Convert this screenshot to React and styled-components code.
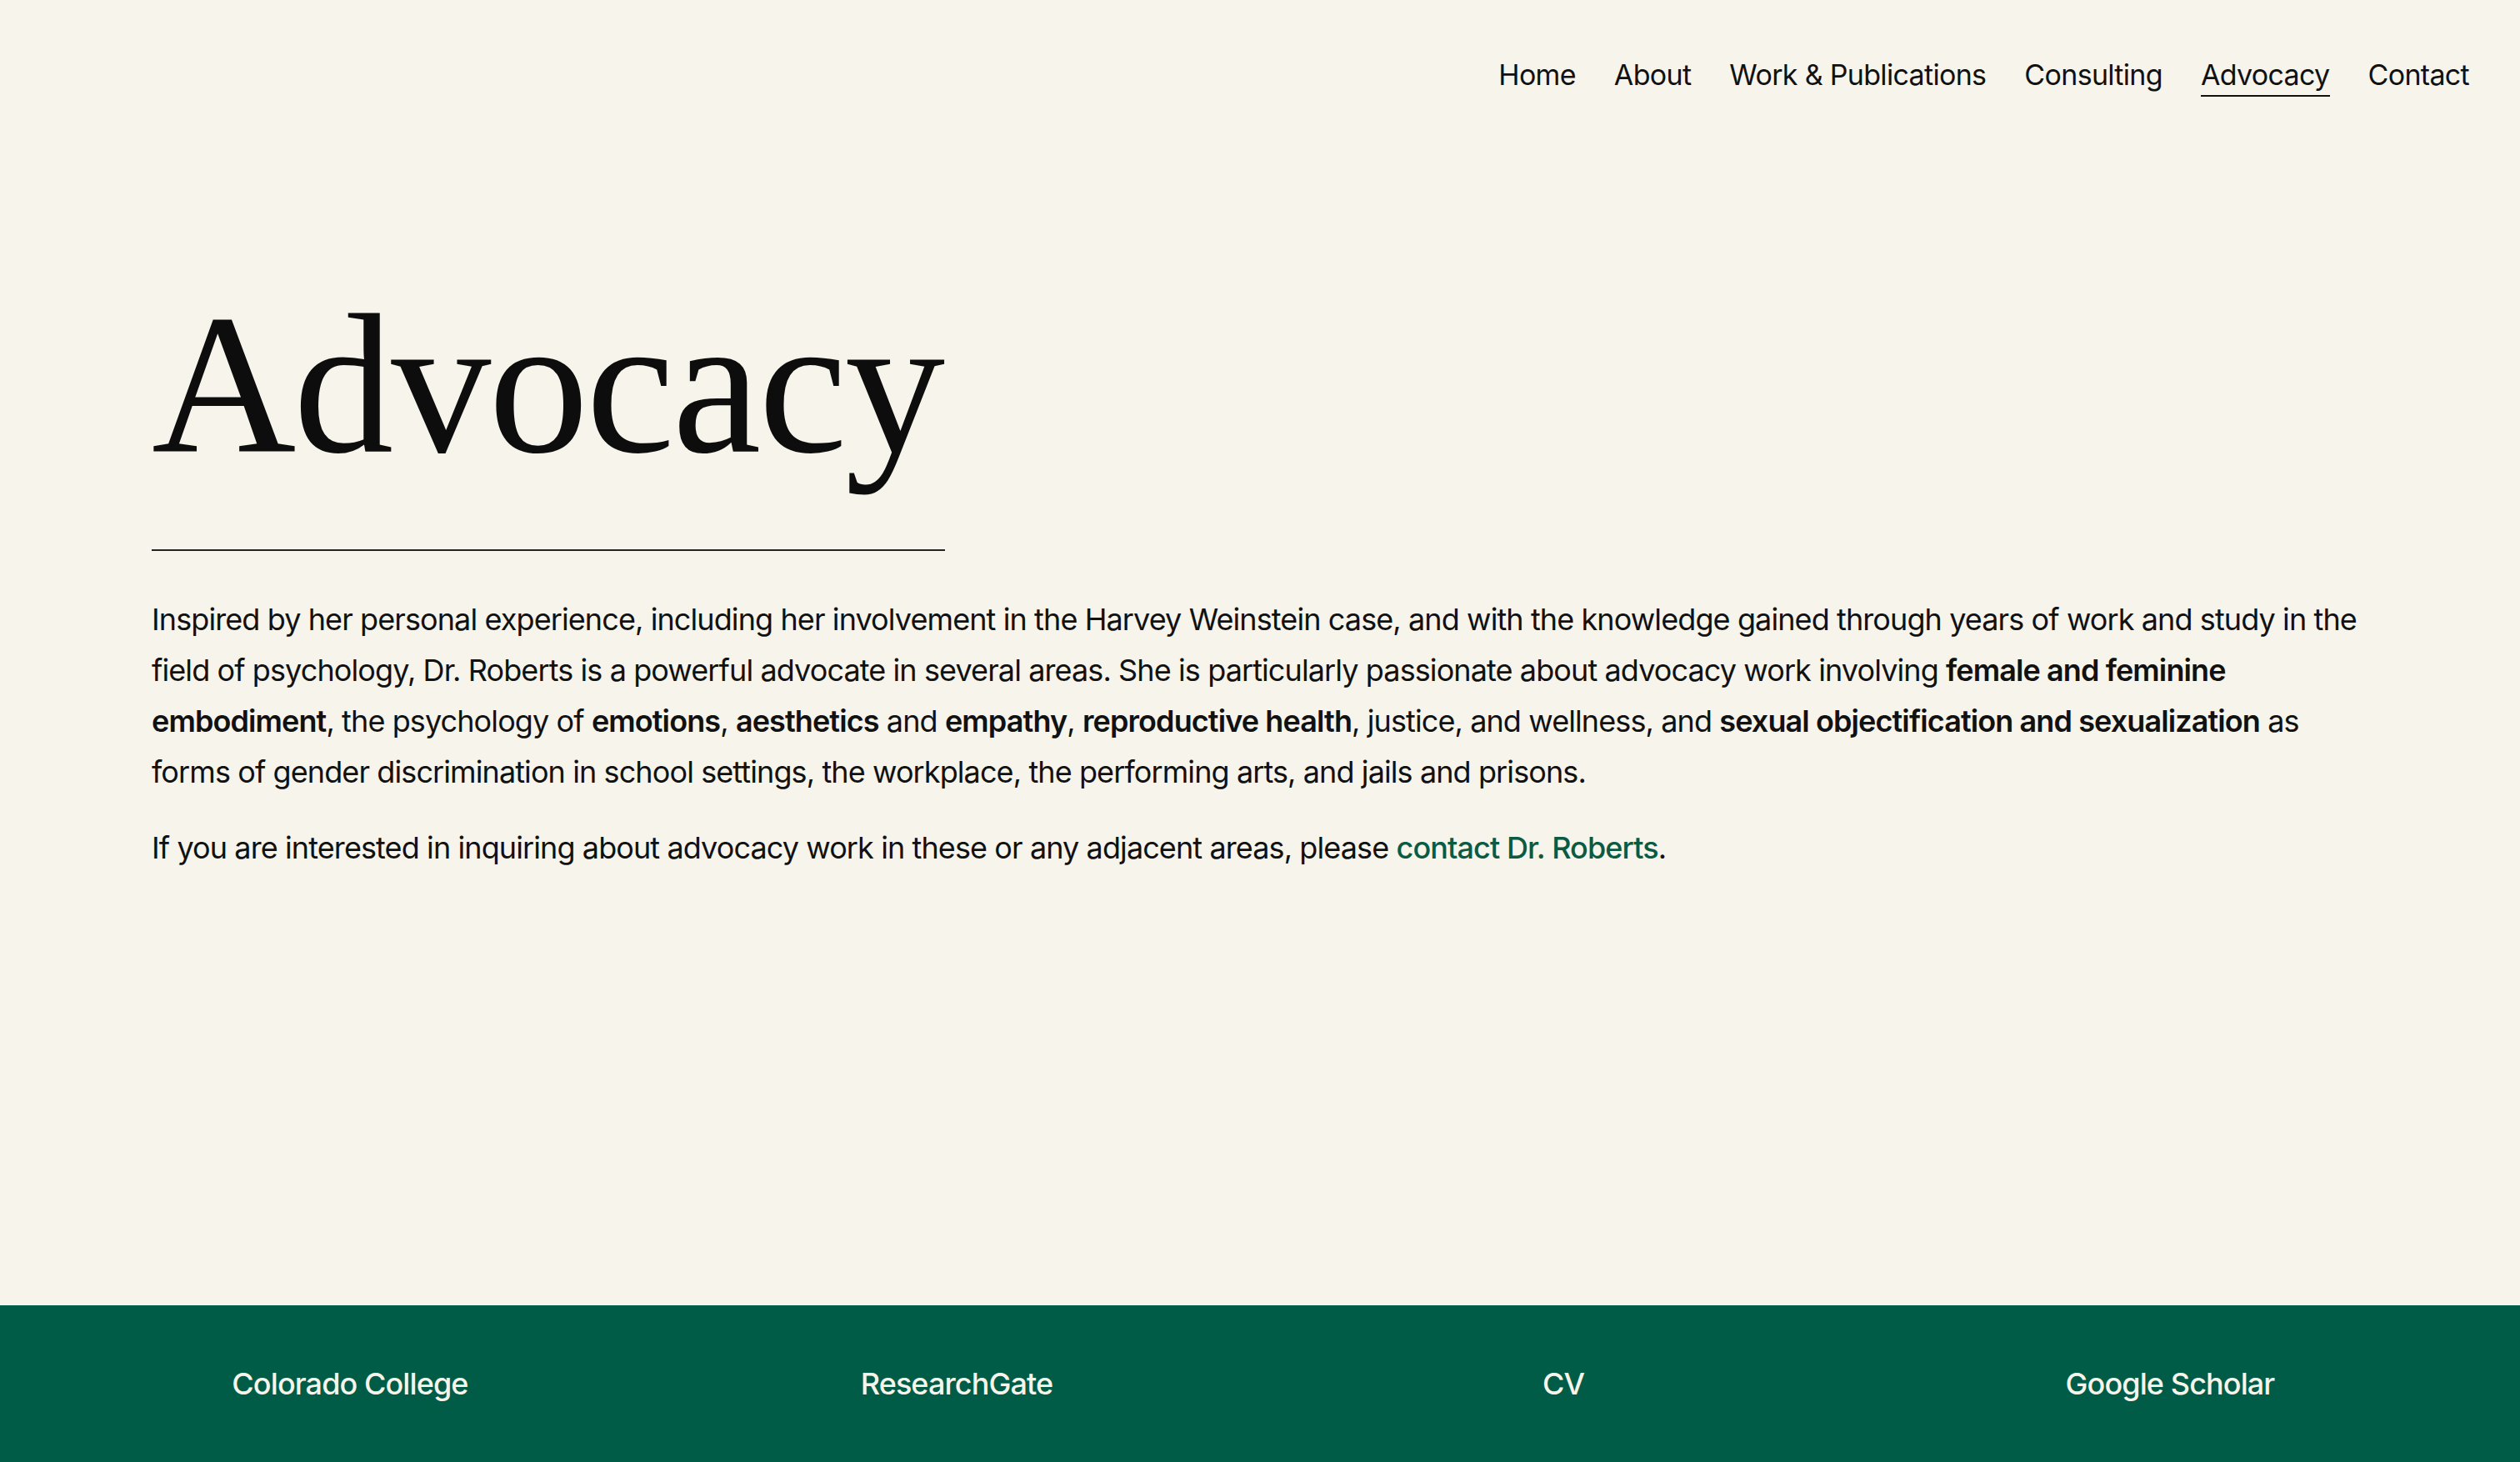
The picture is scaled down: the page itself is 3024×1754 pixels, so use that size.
import React from "react";
import styled, { createGlobalStyle } from "styled-components";

const Global = createGlobalStyle`
  html, body { margin: 0; padding: 0; background: #f6f4eb; }
  body { font-family: Inter, "Noto Sans", sans-serif; color: #111; }
  * { box-sizing: border-box; }
`;

const Page = styled.div`
  min-height: 100vh;
  display: flex;
  flex-direction: column;
  background: #f6f4eb;
`;

const Header = styled.header`
  display: flex;
  justify-content: flex-end;
  padding: 68px 61px 0 182px;
`;

const Nav = styled.nav`
  display: flex;
  gap: 46px;
`;

const NavLink = styled.a`
  font-family: Inter, "Noto Sans", sans-serif;
  font-size: 34px;
  line-height: 44px;
  letter-spacing: -0.02em;
  color: #111;
  text-decoration: none;
  padding-bottom: 2px;
  border-bottom: 2px solid ${(p) => (p.$active ? "#111" : "transparent")};
`;

const Main = styled.main`
  flex: 1;
  padding: 225px 182px 0 182px;
`;

const Title = styled.h1`
  margin: 0;
  width: 952px;
  font-family: "Liberation Serif", "Times New Roman", serif;
  font-weight: 400;
  font-size: 240px;
  line-height: 240px;
  letter-spacing: -3px;
  color: #0d0d0d;
  padding-bottom: 78px;
  border-bottom: 2px solid #222;
`;

const Body = styled.div`
  padding-top: 52px;
  max-width: 2660px;
`;

const Para = styled.p`
  margin: 0 0 30px 0;
  font-family: Inter, "Noto Sans", sans-serif;
  font-size: 36px;
  line-height: 61px;
  letter-spacing: -0.025em;
  color: #111;
`;

const B = styled.strong`
  font-weight: 600;
`;

const Link = styled.a`
  color: #0b5a42;
  font-weight: 500;
  text-decoration: none;
`;

const Footer = styled.footer`
  background: #005c46;
  display: grid;
  grid-template-columns: repeat(4, 1fr);
  padding: 72px 56px 72px 56px;
`;

const FooterLink = styled.a`
  text-align: center;
  font-family: Inter, "Noto Sans", sans-serif;
  font-size: 36px;
  line-height: 44px;
  font-weight: 500;
  letter-spacing: -0.025em;
  color: #f6f4eb;
  text-decoration: none;
`;

const navItems = ["Home", "About", "Work & Publications", "Consulting", "Advocacy", "Contact"];
const footerItems = ["Colorado College", "ResearchGate", "CV", "Google Scholar"];

export default function App() {
  return (
    <Page>
      <Global />
      <Header>
        <Nav>
          {navItems.map((n) => (
            <NavLink key={n} href="#" $active={n === "Advocacy"}>
              {n}
            </NavLink>
          ))}
        </Nav>
      </Header>
      <Main>
        <Title>Advocacy</Title>
        <Body>
          <Para>
            Inspired by her personal experience, including her involvement in the Harvey Weinstein case, and with the
            knowledge gained through years of work and study in the field of psychology, Dr. Roberts is a powerful
            advocate in several areas. She is particularly passionate about advocacy work involving{" "}
            <B>female and feminine embodiment</B>, the psychology of <B>emotions</B>, <B>aesthetics</B> and{" "}
            <B>empathy</B>, <B>reproductive health</B>, justice, and wellness, and{" "}
            <B>sexual objectification and sexualization</B> as forms of gender discrimination in school settings, the
            workplace, the performing arts, and jails and prisons.
          </Para>
          <Para>
            If you are interested in inquiring about advocacy work in these or any adjacent areas, please{" "}
            <Link href="#">contact Dr. Roberts</Link>.
          </Para>
        </Body>
      </Main>
      <Footer>
        {footerItems.map((f) => (
          <FooterLink key={f} href="#">
            {f}
          </FooterLink>
        ))}
      </Footer>
    </Page>
  );
}
